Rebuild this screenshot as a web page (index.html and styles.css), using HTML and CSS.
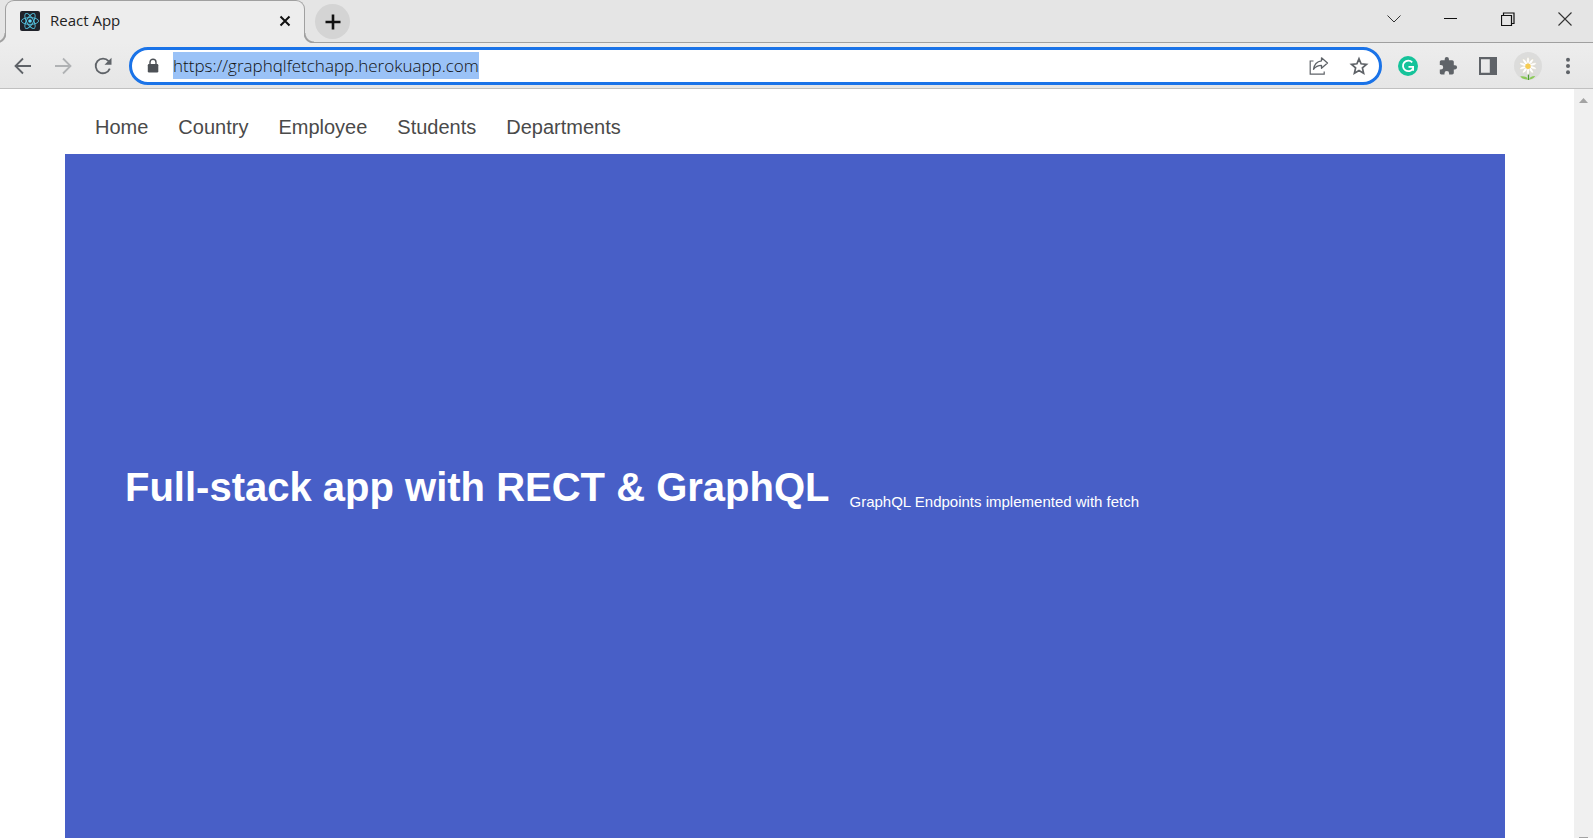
FILE: index.html
```html
<!DOCTYPE html>
<html lang="en">
<head>
<meta charset="utf-8">
<title>React App</title>
<link rel="stylesheet" href="styles.css">
</head>
<body>
<div class="browser">
  <header class="tab-strip">
    <div class="tab">
      <svg class="favicon" viewBox="0 0 20 20" aria-hidden="true">
        <rect width="20" height="20" rx="2" fill="#20232a"/>
        <g fill="none" stroke="#53c1de" stroke-width="0.9">
          <ellipse cx="10" cy="10" rx="8.6" ry="3.4"/>
          <ellipse cx="10" cy="10" rx="8.6" ry="3.4" transform="rotate(60 10 10)"/>
          <ellipse cx="10" cy="10" rx="8.6" ry="3.4" transform="rotate(120 10 10)"/>
        </g>
        <circle cx="10" cy="10" r="1.8" fill="#61dafb"/>
      </svg>
      <span class="tab-title">React App</span>
      <button class="tab-close" aria-label="Close tab">
        <svg width="12" height="12" viewBox="0 0 12 12"><path d="M1.5 1.5l9 9M10.5 1.5l-9 9" stroke="#111" stroke-width="2"/></svg>
      </button>
    </div>
    <button class="new-tab" aria-label="New tab">
      <svg width="16" height="16" viewBox="0 0 16 16"><path d="M8 .5v15M.5 8h15" stroke="#111" stroke-width="2.6"/></svg>
    </button>
    <div class="window-controls">
      <button aria-label="Search tabs"><svg width="14" height="14" viewBox="0 0 14 14"><path d="M.5 3.5L7 10l6.500-6.500" fill="none" stroke="#333" stroke-width="1"/></svg></button>
      <button aria-label="Minimize"><svg width="14" height="14" viewBox="0 0 14 14"><path d="M0 6.500h13" stroke="#111"/></svg></button>
      <button aria-label="Restore"><svg width="14" height="14" viewBox="0 0 14 14"><path d="M.5 3.500h10v10h-10zM2.500 3.500v-2.500h10.500v10.500h-2.500" fill="none" stroke="#111" stroke-width="1.200"/></svg></button>
      <button aria-label="Close"><svg width="14" height="14" viewBox="0 0 14 14"><path d="M.5.5l13 13M13.500.5l-13 13" stroke="#333" stroke-width="1.100"/></svg></button>
    </div>
  </header>

  <div class="toolbar">
    <div class="history">
      <button aria-label="Back"><svg width="20" height="20" viewBox="0 0 20 20"><path d="M18 10H3M10 2.500L2.500 10l7.500 7.500" fill="none" stroke="#5f6368" stroke-width="1.800"/></svg></button>
      <button aria-label="Forward"><svg width="20" height="20" viewBox="0 0 20 20"><path d="M2 10h15M10 2.500l7.500 7.500-7.500 7.500" fill="none" stroke="#b0b2b4" stroke-width="1.800"/></svg></button>
      <button aria-label="Reload"><svg width="20" height="20" viewBox="0 0 20 20"><path d="M16.800 12.600A7.300 7.300 0 1 1 15.600 5.200" fill="none" stroke="#5f6368" stroke-width="1.800"/><path d="M18.500 1.800v7h-7z" fill="#5f6368"/></svg></button>
    </div>
    <form class="omnibox">
      <svg class="lock" viewBox="0 0 12 16" aria-hidden="true"><path d="M3 6.500V4.200a3 3 0 0 1 6 0v2.300" fill="none" stroke="#4d5156" stroke-width="1.400"/><rect x=".8" y="6" width="10.500" height="8.500" rx="1.200" fill="#4d5156"/></svg>
      <div class="url-slot"><input class="url" type="text" size="37" aria-label="Address" value="https://graphqlfetchapp.herokuapp.com"></div>
      <button type="button" aria-label="Share"><svg width="20" height="20" viewBox="0 0 20 20"><path d="M4.500 5H1.200v13.200h14V15.500" fill="none" stroke="#5f6368" stroke-width="1.200"/><path d="M12.500 1.800l6 5.200-6 5.200V9.300c-3.800 0-6 1.200-8 4 .6-4.500 3.300-7.800 8-8.500z" fill="none" stroke="#5f6368" stroke-width="1.300" stroke-linejoin="round"/></svg></button>
      <button type="button" aria-label="Bookmark"><svg width="20" height="20" viewBox="0 0 20 20"><path d="M10 2.800l2.100 5 5.400.5-4.100 3.600 1.200 5.300-4.600-2.800-4.600 2.800 1.200-5.300-4.100-3.600 5.400-.5z" fill="none" stroke="#5f6368" stroke-width="1.700"/></svg></button>
    </form>
    <div class="extensions">
      <button aria-label="Grammarly"><svg width="20" height="20" viewBox="0 0 20 20"><circle cx="10" cy="10" r="10" fill="#15c39a"/><path d="M14.200 6.300A5.300 5.300 0 1 0 15 12.300M10.500 10.800h4.600v4" fill="none" stroke="#fff" stroke-width="1.800"/></svg></button>
      <button aria-label="Extensions"><svg width="20" height="20" viewBox="0 0 20 20"><path d="M17 9.200h-1.200V6c0-.9-.7-1.700-1.600-1.700h-3.300V3.100a2.100 2.100 0 0 0-4.200 0v1.200H3.400c-.9 0-1.600.8-1.600 1.700v3h1.100a2.300 2.300 0 0 1 0 4.600H1.800v3.200c0 .9.700 1.600 1.600 1.600h3.100v-1.200a2.300 2.300 0 0 1 4.600 0v1.200h3.100c.9 0 1.600-.7 1.600-1.600v-3.400H17a2.100 2.100 0 0 0 0-4.200z" fill="#5f6368"/></svg></button>
      <button aria-label="Side panel"><svg width="20" height="20" viewBox="0 0 20 20"><path d="M1 1h18v18H1zM3 3.200v13.600h8.800V3.200z" fill="#5f6368" fill-rule="evenodd"/></svg></button>
      <button class="avatar" aria-label="Profile"><svg width="28" height="28" viewBox="0 0 28 28">
        <circle cx="14" cy="14" r="14" fill="#dcdcdb"/>
        <path d="M14.500 17v11" stroke="#4e9a35" stroke-width="1.300"/>
        <path d="M14 27.500c-1-2.800-4-3.700-7.800-3.200 1.600 2.300 4.500 3.500 7.800 3.200zM15 27.500c.6-2.400 2.800-3.600 6.200-3.500-1.300 2.200-3.300 3.400-6.200 3.500z" fill="#8ccb58"/>
        <g fill="#fff" stroke="#d6cfbb" stroke-width=".4">
          <ellipse cx="14" cy="9.200" rx="1.400" ry="4"/>
          <ellipse cx="14" cy="9.200" rx="1.400" ry="4" transform="rotate(36 14 14)"/>
          <ellipse cx="14" cy="9.200" rx="1.400" ry="4" transform="rotate(72 14 14)"/>
          <ellipse cx="14" cy="9.200" rx="1.400" ry="4" transform="rotate(108 14 14)"/>
          <ellipse cx="14" cy="9.200" rx="1.400" ry="4" transform="rotate(144 14 14)"/>
          <ellipse cx="14" cy="9.200" rx="1.400" ry="4" transform="rotate(180 14 14)"/>
          <ellipse cx="14" cy="9.200" rx="1.400" ry="4" transform="rotate(216 14 14)"/>
          <ellipse cx="14" cy="9.200" rx="1.400" ry="4" transform="rotate(252 14 14)"/>
          <ellipse cx="14" cy="9.200" rx="1.400" ry="4" transform="rotate(288 14 14)"/>
          <ellipse cx="14" cy="9.200" rx="1.400" ry="4" transform="rotate(324 14 14)"/>
        </g>
        <circle cx="14" cy="14.300" r="2.700" fill="#f6cc52"/>
      </svg></button>
      <button aria-label="Menu"><svg width="20" height="20" viewBox="0 0 20 20"><g fill="#5f6368"><circle cx="10" cy="3.800" r="2"/><circle cx="10" cy="10" r="2"/><circle cx="10" cy="16.200" r="2"/></g></svg></button>
    </div>
  </div>

  <div class="viewport">
    <div class="page">
      <nav class="nav">
        <a href="#home">Home</a>
        <a href="#country">Country</a>
        <a href="#employee">Employee</a>
        <a href="#students">Students</a>
        <a href="#departments">Departments</a>
      </nav>
      <main class="hero">
        <h1>Full-stack app with RECT &amp; GraphQL</h1>
        <p>GraphQL Endpoints implemented with fetch</p>
      </main>
    </div>
    <div class="scrollbar" aria-hidden="true">
      <svg width="9" height="5" viewBox="0 0 9 5"><path d="M0 5L4.500 0 9 5z" fill="#a3a3a3"/></svg>
      <span class="scroll-end"></span>
    </div>
  </div>
</div>
</body>
</html>
```
FILE: styles.css
```css
* {
  box-sizing: border-box;
}

body {
  margin: 0;
  font-family: "Liberation Sans", Arial, sans-serif;
}

button {
  display: grid;
  place-items: center;
  padding: 0;
  border: 0;
  background: none;
}

svg {
  display: block;
}

.browser {
  display: flex;
  flex-direction: column;
  height: 100vh;
  overflow: hidden;
  background: #fff;
}

/* Tab strip */
.tab-strip {
  display: flex;
  height: 43px;
  padding-left: 5px;
  background: linear-gradient(#a0a0a0, #a0a0a0) bottom / 100% 1px no-repeat #e5e5e5;
}

.tab {
  position: relative;
  display: flex;
  align-items: center;
  width: 300px;
  padding: 0 12px 2px 14px;
  border: 1px solid #a0a0a0;
  border-bottom: 0;
  border-radius: 9px 9px 0 0;
  background: #ededed;
}

/* Flared feet that join the tab to the strip's lower edge */
.tab::before,
.tab::after {
  content: "";
  position: absolute;
  bottom: 0;
  width: 10px;
  height: 10px;
}

.tab::before {
  right: 100%;
  background: radial-gradient(circle at 0 0, #e5e5e5 8px, #a0a0a0 9px, #a0a0a0 10px, #ededed 11px);
}

.tab::after {
  left: 100%;
  background: radial-gradient(circle at 100% 0, #e5e5e5 8px, #a0a0a0 9px, #a0a0a0 10px, #ededed 11px);
}

.favicon {
  width: 20px;
  height: 20px;
}

.tab-title {
  flex: 1;
  padding: 0 0 2px 10px;
  font: 15px "Open Sans", sans-serif;
  color: #222;
}

.tab-close {
  width: 14px;
  height: 20px;
}

.new-tab {
  width: 35px;
  height: 35px;
  margin: 4px 0 0 10px;
  border-radius: 50%;
  background: #d4d4d4;
}

.window-controls {
  display: flex;
  height: 38px;
  margin-left: auto;
}

.window-controls button {
  width: 57px;
}

/* Toolbar */
.toolbar {
  display: flex;
  align-items: center;
  height: 46px;
  padding: 0 15px 0 13px;
  border-bottom: 1px solid #c0c0c0;
  background: linear-gradient(#ededed, #e6e6e6);
}

.history {
  display: flex;
  gap: 20px;
  margin-right: 16px;
}

.omnibox {
  display: flex;
  flex: 1;
  align-items: center;
  gap: 20px;
  height: 38px;
  padding: 0 10px 0 15px;
  border: 3px solid #1a73e8;
  border-radius: 19px;
  background: #fff;
}

.lock {
  width: 12px;
  height: 16px;
  margin-right: -6px;
}

.url-slot {
  flex: 1;
}

.url {
  display: block;
  height: 27px;
  padding: 0;
  border: 0;
  outline: 0;
  field-sizing: content;
  background: #9ac2f7;
  font: 300 17px "Open Sans", sans-serif;
  color: #111;
}

.extensions {
  display: flex;
  align-items: center;
  gap: 20px;
  margin-left: 16px;
}

.avatar {
  margin: 0 -4px;
}

/* Page content */
.viewport {
  display: flex;
  flex: 1;
  min-height: 0;
}

.page {
  display: flex;
  flex: 1;
  flex-direction: column;
  padding: 0 69px 0 65px;
}

.nav {
  display: flex;
  align-items: center;
  gap: 30px;
  height: 65px;
  padding: 10px 30px 0;
}

.nav a {
  font-size: 20px;
  line-height: 24px;
  color: #4a4a4a;
  text-decoration: none;
}

.hero {
  display: flex;
  flex: 1;
  align-items: center;
  gap: 20px;
  padding: 0 60px 18px;
  background: #485fc7;
  color: #fff;
}

.hero h1,
.hero p {
  margin: 0;
  white-space: nowrap;
}

.hero h1 {
  font-size: 40px;
  line-height: 46px;
}

.hero p {
  padding-top: 30px;
  font-size: 15px;
  line-height: 20px;
}

.scrollbar {
  display: flex;
  flex-direction: column;
  align-items: center;
  justify-content: space-between;
  width: 19px;
  padding-top: 9px;
  background: #f0f0f0;
}

.scroll-end {
  width: 9px;
  height: 1px;
  background: #a3a3a3;
}
```
